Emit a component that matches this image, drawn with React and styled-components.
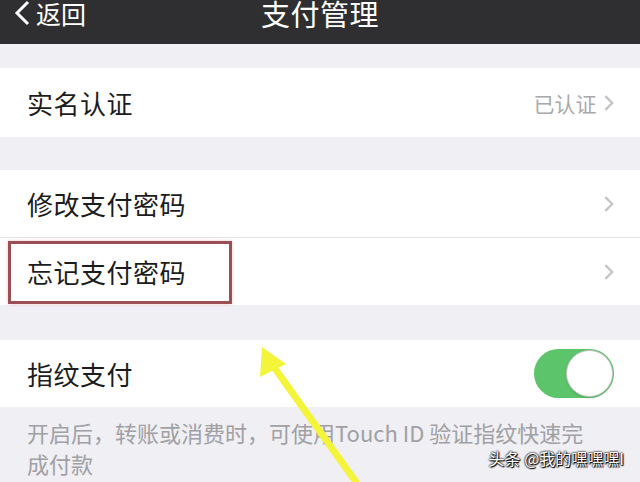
import React from "react";
import styled, { createGlobalStyle } from "styled-components";

const Global = createGlobalStyle`
  html, body {
    margin: 0;
    padding: 0;
    background: #efeff4;
  }
  body {
    font-family: "Noto Sans CJK SC", "Noto Sans", sans-serif;
  }
`;

const Screen = styled.div`
  position: relative;
  width: 640px;
  height: 482px;
  overflow: hidden;
  background: #efeff4;
`;

const NavBar = styled.header`
  height: 44px;
  box-sizing: border-box;
  padding: 0 14px 18px;
  background: #2f2f31;
  color: #fff;
  display: grid;
  grid-template-columns: 1fr auto 1fr;
  align-items: center;
`;

const Back = styled.div`
  display: flex;
  align-items: center;
  gap: 6px;
  font-size: 25px;
  line-height: 26px;
`;

const Title = styled.div`
  font-size: 29px;
  line-height: 26px;
  letter-spacing: 0.5px;
`;

const Gap = styled.div`
  height: ${(p) => p.h}px;
`;

const Group = styled.section`
  background: #fff;
`;

const Row = styled.div`
  position: relative;
  height: ${(p) => p.h || 67}px;
  display: flex;
  align-items: center;
  justify-content: space-between;
  padding: 0 26px 0 27px;
  box-sizing: border-box;
  border-top: ${(p) => (p.divider ? "1px solid #e6e6ea" : "none")};
`;

const Label = styled.span`
  font-size: 26px;
  color: #1c1c1c;
  letter-spacing: 0.5px;
`;

const Detail = styled.span`
  display: flex;
  align-items: center;
  gap: 8px;
  font-size: 21px;
  color: #a9a9ad;
`;

const Highlight = styled.div`
  position: absolute;
  left: 8px;
  top: 3px;
  width: 224px;
  height: 63px;
  box-sizing: border-box;
  border: 3px solid #9c4e55;
  box-shadow: 0 0 3px rgba(200, 80, 90, 0.35);
`;

const Toggle = styled.div`
  width: 80px;
  height: 49px;
  border-radius: 25px;
  background: #5cc46a;
  position: relative;
`;

const Knob = styled.div`
  position: absolute;
  right: 2px;
  top: 2px;
  width: 45px;
  height: 45px;
  border-radius: 50%;
  background: #fff;
  box-shadow: 0 0 0 1px #c9c9c9, 0 1px 3px rgba(0, 0, 0, 0.3);
`;

const Note = styled.p`
  margin: 0;
  padding: 10px 45px 0 27px;
  font-size: 22px;
  line-height: 31px;
  color: #a0a0a5;
`;

const Watermark = styled.div`
  position: absolute;
  right: 16px;
  bottom: 12px;
  font-size: 16px;
  color: #fff;
  text-shadow: 0 0 2px #000, 0 0 2px #000, 1px 1px 1px #000;
`;

const Arrow = styled.svg`
  position: absolute;
  left: 0;
  top: 0;
  pointer-events: none;
`;

const Chevron = ({ size = 14, color = "#c4c4c8", w = 2 }) => (
  <svg width={size * 0.6} height={size} viewBox="0 0 8 14">
    <path d="M1 1l6 6-6 6" fill="none" stroke={color} strokeWidth={w} />
  </svg>
);

export default function App() {
  return (
    <Screen>
      <Global />
      <NavBar>
        <Back>
          <svg width="16" height="26" viewBox="0 0 16 26">
            <path d="M14 2L3 13l11 11" fill="none" stroke="#fff" strokeWidth="3" />
          </svg>
          返回
        </Back>
        <Title>支付管理</Title>
        <div />
      </NavBar>
      <Gap h={24} />
      <Group>
        <Row h={69}>
          <Label>实名认证</Label>
          <Detail>
            已认证
            <Chevron size={16} />
          </Detail>
        </Row>
      </Group>
      <Gap h={33} />
      <Group>
        <Row>
          <Label>修改支付密码</Label>
          <Chevron size={16} />
        </Row>
        <Row divider h={68}>
          <Highlight />
          <Label>忘记支付密码</Label>
          <Chevron size={16} />
        </Row>
      </Group>
      <Gap h={35} />
      <Group>
        <Row>
          <Label>指纹支付</Label>
          <Toggle>
            <Knob />
          </Toggle>
        </Row>
      </Group>
      <Note>开启后，转账或消费时，可使用Touch ID 验证指纹快速完成付款</Note>
      <Watermark>头条 @我的嘿嘿嘿I</Watermark>
      <Arrow width="640" height="482">
        <path d="M266 356 L356 482" stroke="#f4f43a" strokeWidth="7" strokeLinecap="round" />
        <path d="M262 347 L260 377 L286 364 Z" fill="#f4f43a" />
      </Arrow>
    </Screen>
  );
}
